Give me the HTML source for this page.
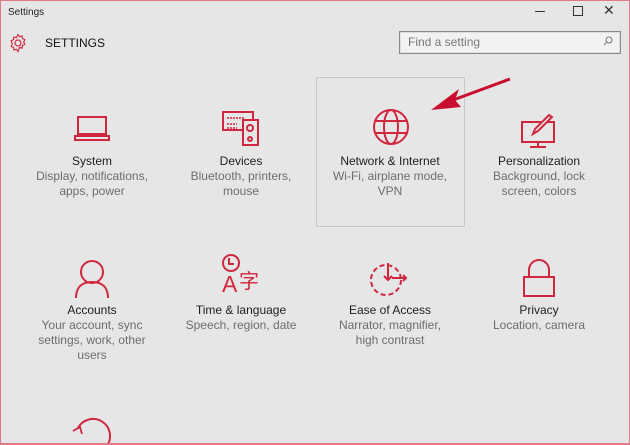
<html><head><style>
body{margin:0;width:630px;height:445px;overflow:hidden;background:#e6e6e6;font-family:"Liberation Sans",sans-serif;position:relative}
.win{position:absolute;left:0;top:0;width:628px;height:444px;border:1px solid #e07a86;border-bottom:none}
.t{position:absolute;font-size:12px;color:#1e1e1e;text-align:center;width:148px;line-height:15px}
.t span{color:#6d6d6d;display:block}
svg{position:absolute}
</style></head><body><div class="win"></div>
<div style="position:absolute;left:8px;top:7px;font-size:10px;color:#222">Settings</div>
<div style="position:absolute;left:535px;top:11px;width:10px;height:1px;background:#333"></div>
<div style="position:absolute;left:573px;top:6px;width:8px;height:8px;border:1px solid #333"></div>
<div style="position:absolute;left:603px;top:2px;font-size:14px;color:#333">✕</div>
<svg style="left:8px;top:33px" width="20" height="20" viewBox="0 0 20 20"><circle cx="10" cy="10" r="3" fill="none" stroke="#d0263e" stroke-width="1.2"/><path d="M10 1.5l1.5 2.2 2.6-.7.3 2.6 2.5 1-1.2 2.4 1.2 2.4-2.5 1-.3 2.6-2.6-.7L10 18.5l-1.5-2.2-2.6.7-.3-2.6-2.5-1 1.2-2.4L3.100 7.6l2.5-1 .3-2.6 2.6.7z" fill="none" stroke="#d0263e" stroke-width="1.1"/></svg>
<div style="position:absolute;left:45px;top:36px;font-size:12px;color:#111">SETTINGS</div>
<div style="position:absolute;left:399px;top:31px;width:220px;height:21px;border:1px solid #8a8a8a;background:#f2f2f2;box-shadow:inset 0 0 0 1px #ddd"></div>
<div style="position:absolute;left:408px;top:35px;font-size:12px;color:#777">Find a setting</div>
<svg style="left:603px;top:36px" width="10" height="10"><circle cx="6" cy="4" r="3" fill="none" stroke="#777"/><path d="M4 6L1 9" stroke="#777"/></svg>
<div style="position:absolute;left:316px;top:77px;width:147px;height:148px;border:1px solid #c8c8c8"></div>
<svg style="left:0;top:0" width="630" height="445" fill="none" stroke="#d0263e" stroke-width="2">
<rect x="78" y="117" width="28" height="17"/><path d="M75 136h34v4H75z"/>
<rect x="223" y="112" width="30" height="18"/><rect x="243" y="120" width="15" height="25" fill="#e6e6e6"/><circle cx="250" cy="128" r="3"/><circle cx="250" cy="139" r="2"/><path d="M227 118h18M227 124h10M227 128h10" stroke-width="1.5" stroke-dasharray="2 1"/>
<circle cx="391" cy="127" r="17"/><ellipse cx="391" cy="127" rx="7" ry="17"/><path d="M375 121h32M375 133h32"/>
<rect x="522" y="122" width="32" height="20"/><path d="M538 142v5M530 147h16"/><path d="M552 117l-14 14-5 3 2-5 14-14z" fill="#e6e6e6"/>
<circle cx="92" cy="272" r="11"/><path d="M76 298c0-12 7-16 16-16s16 4 16 16"/>
<circle cx="231" cy="263" r="8"/><path d="M229 258v6h5"/>
<circle cx="386" cy="280" r="15" stroke-dasharray="5 3"/><path d="M388 263v17M384 276l4 4 4-4M392 278h14M403 275l3 3-3 3"/>
<path d="M529 277v-7a10 10 0 0 1 20 0v7"/><rect x="524" y="277" width="30" height="19" fill="#e6e6e6"/>
<path d="M78 428a17 17 0 1 1 3 20"/><path d="M73 431l7-4 2 7" stroke-width="1.8"/>
</svg>
<div style="position:absolute;left:222px;top:271px;font-size:23px;color:#d0263e;line-height:26px">A</div>
<div style="position:absolute;left:239px;top:268px;font-size:20px;color:#d0263e;line-height:24px;font-family:'Noto Sans CJK SC',sans-serif">字</div>
<svg style="left:0;top:0" width="630" height="445"><path d="M510 79L445 103" stroke="#c8102e" stroke-width="3"/><path d="M431 110l28-21-4 11 6 7z" fill="#c8102e"/></svg>
<div class="t" style="left:18px;top:154px">System<span>Display, notifications,<br>apps, power</span></div>
<div class="t" style="left:167px;top:154px">Devices<span>Bluetooth, printers,<br>mouse</span></div>
<div class="t" style="left:316px;top:154px">Network &amp; Internet<span>Wi-Fi, airplane mode,<br>VPN</span></div>
<div class="t" style="left:465px;top:154px">Personalization<span>Background, lock<br>screen, colors</span></div>
<div class="t" style="left:18px;top:303px">Accounts<span>Your account, sync<br>settings, work, other<br>users</span></div>
<div class="t" style="left:167px;top:303px">Time &amp; language<span>Speech, region, date</span></div>
<div class="t" style="left:316px;top:303px">Ease of Access<span>Narrator, magnifier,<br>high contrast</span></div>
<div class="t" style="left:465px;top:303px">Privacy<span>Location, camera</span></div>
<div style="position:absolute;left:0;top:443px;width:630px;height:2px;background:#e07a86"></div>
</body></html>
